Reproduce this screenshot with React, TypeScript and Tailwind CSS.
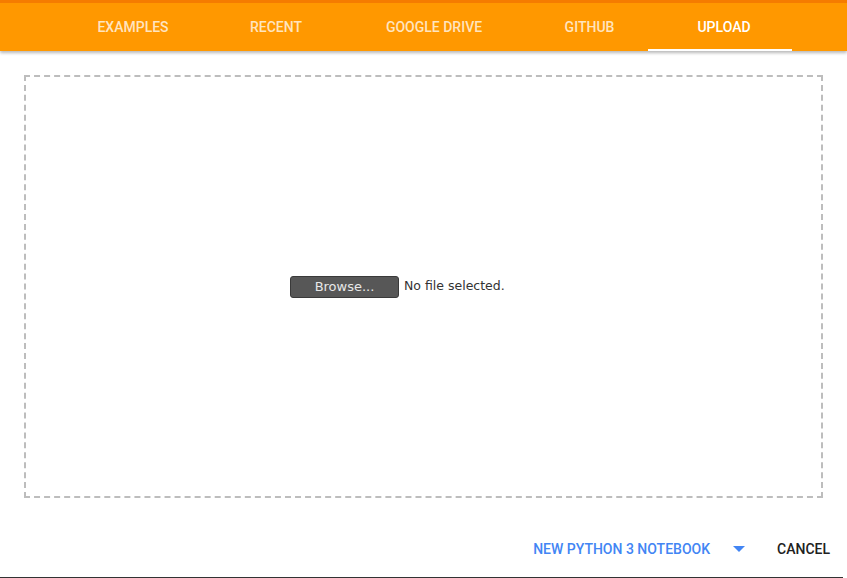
const tabs = [
  { label: "EXAMPLES", w: "w-[164px]" },
  { label: "RECENT", w: "w-[122px]" },
  { label: "GOOGLE DRIVE", w: "w-[194px]" },
  { label: "GITHUB", w: "w-[117px]" },
  { label: "UPLOAD", w: "w-[144px] pl-[8px]", active: true },
];

export default function App() {
  return (
    <div className="w-[847px] h-[578px] bg-white flex flex-col overflow-hidden font-['Roboto',sans-serif]">
      <header className="relative z-10 bg-[#ff9800] border-t-[3px] border-[#f57c00] shadow-[0_2px_3px_rgba(0,0,0,0.28)]">
        <nav className="flex h-[48px] pl-[51px]">
          {tabs.map((tab) => (
            <div
              key={tab.label}
              className={`${tab.w} relative flex items-center justify-center text-[14px] font-medium ${
                tab.active ? "text-white" : "text-white/75"
              }`}
            >
              {tab.label}
              {tab.active && (
                <span className="absolute left-0 right-0 bottom-0 h-[2px] bg-white" />
              )}
            </div>
          ))}
        </nav>
      </header>

      <main className="flex-1 flex flex-col px-[24px] pt-[24px]">
        <div className="h-[423px] border-2 border-dashed border-[#bdbdbd] flex items-center pl-[264px]">
          <div className="flex items-center gap-[5px] font-['DejaVu_Sans',sans-serif] text-[12.5px] text-[#333]">
            <button className="w-[109px] h-[22px] rounded-[3px] border border-[#3a3a3a] bg-[#575757] text-[#e8e8e8] text-[13px]">
              Browse...
            </button>
            <span>No file selected.</span>
          </div>
        </div>

        <div className="flex items-center justify-end h-[56px] mr-[-24px] pr-[17px] mt-[23px] text-[14px] font-medium">
          <span className="text-[#4285f4]">NEW PYTHON 3 NOTEBOOK</span>
          <svg width="12" height="6" viewBox="0 0 12 6" className="ml-[23px] mr-[32px] text-[#4285f4]">
            <path d="M0 0 L12 0 L6 6 Z" fill="currentColor" />
          </svg>
          <span className="text-[#212121]">CANCEL</span>
        </div>
      </main>
      <div className="h-[2px] bg-[#333] mr-[4px]" />
    </div>
  );
}
